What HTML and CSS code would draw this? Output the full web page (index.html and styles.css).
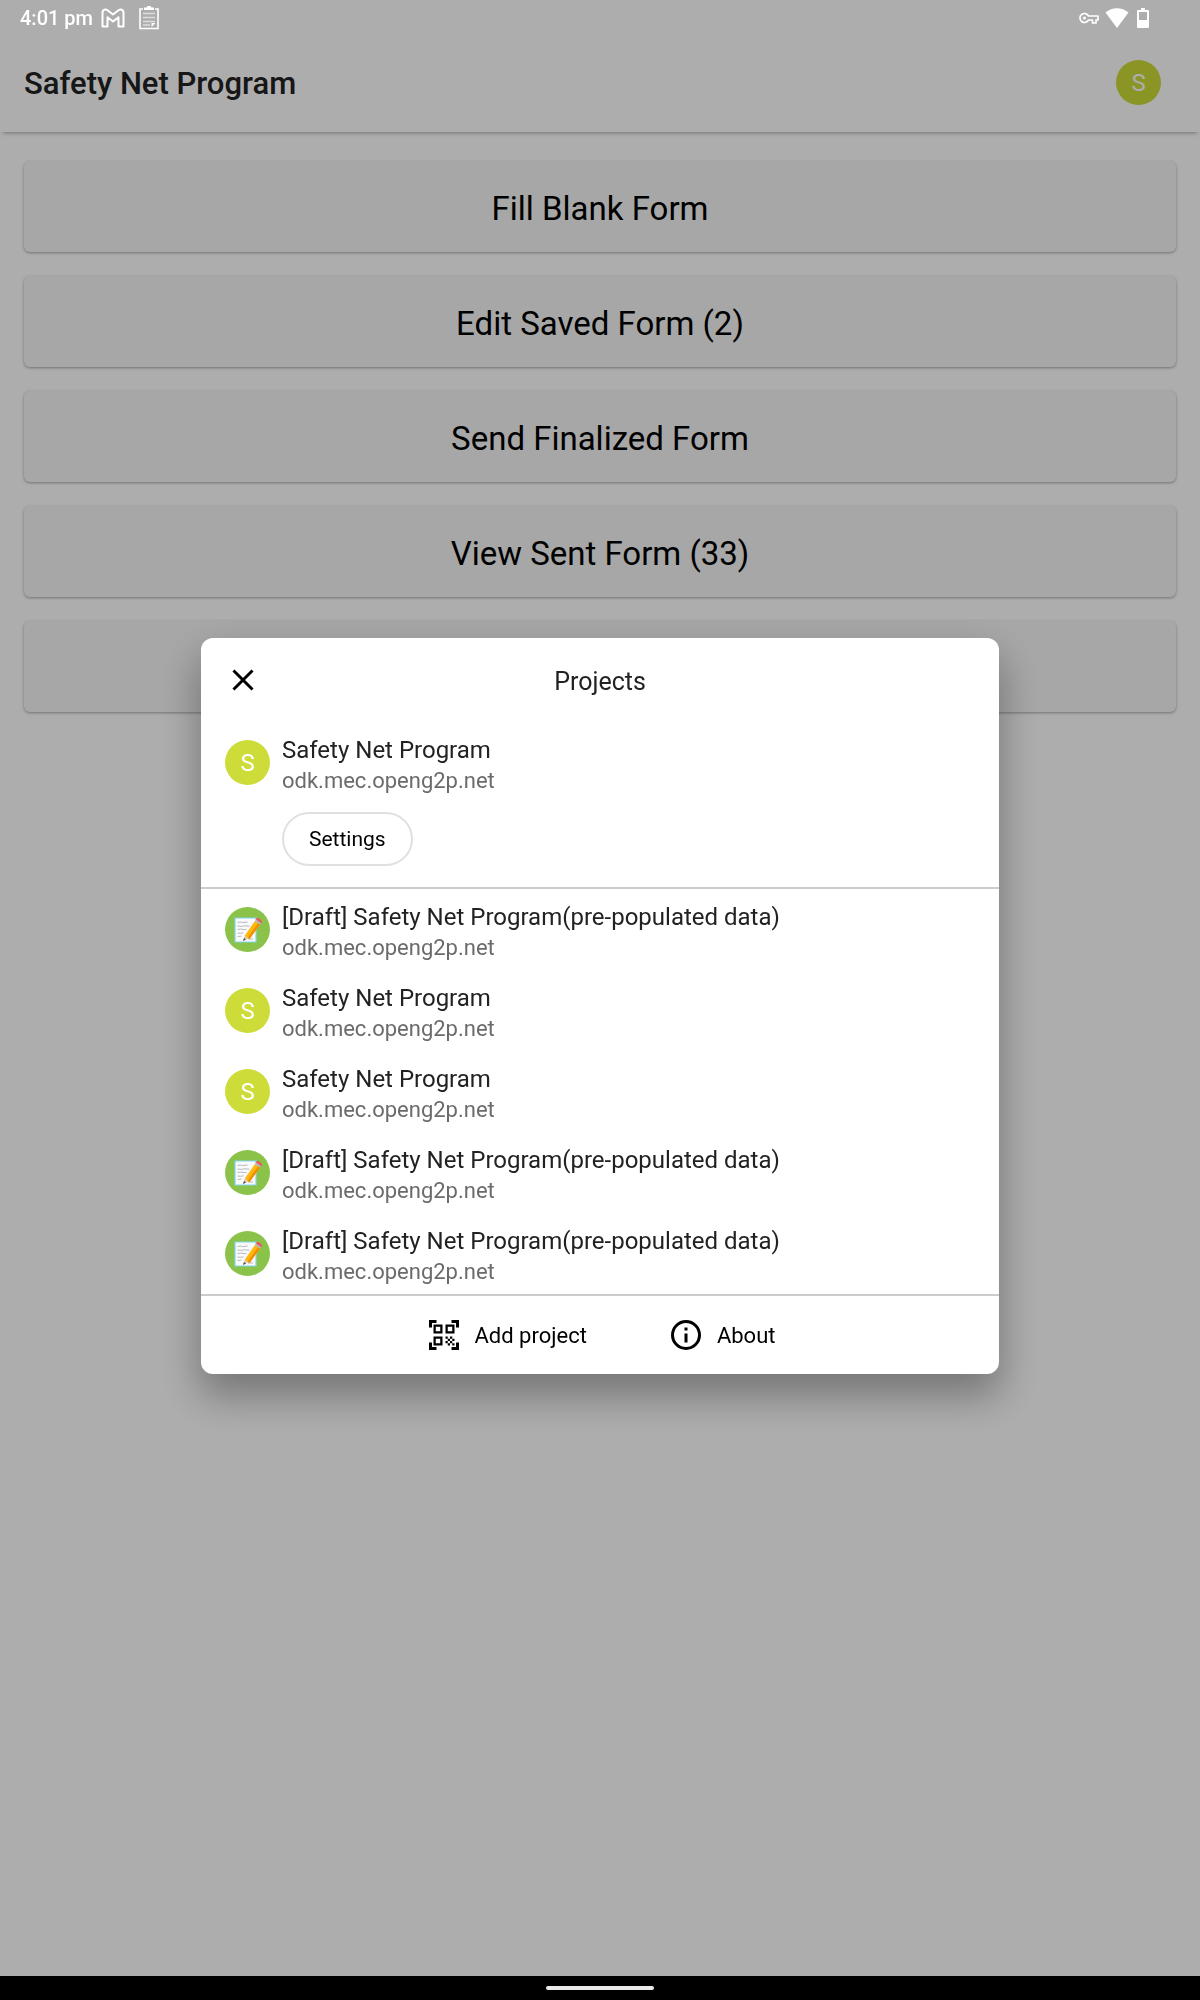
FILE: index.html
```html
<!DOCTYPE html>
<html lang="en">
<head>
<meta charset="utf-8">
<meta name="viewport" content="width=device-width, initial-scale=1">
<title>Safety Net Program</title>
<link rel="stylesheet" href="styles.css">
</head>
<body>
<svg class="sprite" aria-hidden="true">
  <symbol id="memo" viewBox="0 0 28 28">
    <path d="M1 2h21v24H1z" fill="#fafafa" stroke="#82d4f2" stroke-width="1.2"/>
    <path d="M3.500 6.500l3-.5 2 .6 5-.6M3.500 10l4 .4 3-.6 5 .4M3.500 13.500l3-.4 4 .5 2-.3M3.500 17l3 .3 3-.5M3.500 20.500l4-.4M14 23h5" fill="none" stroke="#b4b9bd" stroke-width="1"/>
    <path d="M9 25l2-6 4 3z" fill="#e8c9a0"/>
    <path d="M9 25l1-3 2 1.600z" fill="#454c50"/>
    <path d="M10.800 19.500L21 5l5 3.500L15.500 23z" fill="#ffb70d"/>
    <path d="M13.800 21.700L24 7.200l2 1.300L15.500 23z" fill="#f28c00"/>
    <path d="M21 5l1.300-1.800 5 3.500L26 8.500z" fill="#b0bec5"/>
    <path d="M22.300 3.200C23.500 1 28 3.800 27.300 6.700z" fill="#f2555a" stroke="#f2555a" stroke-width="1"/>
  </symbol>
</svg>

<div class="status">
  <span class="clock">4:01 pm</span>
  <svg class="gmail" viewBox="0 0 24 20" aria-hidden="true"><path d="M1.500 18.500v-14C1.500 1.500 4.500.8 6.500 2.300L12 6.500l5.500-4.200c2-1.500 5-.8 5 2.200v14h-5V9.300L12 13.500 6.500 9.300v9.200z" fill="none" stroke="#fff" stroke-width="2" stroke-linejoin="round"/></svg>
  <svg class="clip" viewBox="0 0 22 24" aria-hidden="true"><path d="M5 3H2v19.500h18V3h-3" fill="none" stroke="#fff" stroke-width="1.600"/><path d="M6 1.500h2.500L9.500 0h3l1 1.500H16V4H6z" fill="#fff"/><path d="M5 7.500h12M5 11.500h12M5 15.500h12M5 19h7" stroke="#ddd" stroke-width="1.400"/><path d="M13.500 17h4l-4 4z" fill="#fff"/></svg>
  <span class="spacer"></span>
  <svg class="key" viewBox="0 0 20 12" aria-hidden="true"><path d="M9.500 4H19v4h-2v3h-3.500V8h-4A4.500 4.500 0 1 1 9.500 4z" fill="none" stroke="#fff" stroke-width="1.700" stroke-linejoin="round"/><circle cx="5.500" cy="6" r="1.600" fill="#fff"/></svg>
  <svg class="wifi" viewBox="0 0 24 20" aria-hidden="true"><path d="M12 20L.5 4.500C7-1.200 17-1.200 23.500 4.500z" fill="#fff"/></svg>
  <svg class="battery" viewBox="0 0 12 20" aria-hidden="true"><path d="M4 0h4v2h3q1 0 1 1v16q0 1-1 1H1q-1 0-1-1V3q0-1 1-1h3zM2 4v8h8V4z" fill="#fff" fill-rule="evenodd"/></svg>
</div>

<header class="appbar">
  <h1 class="appbar-title">Safety Net Program</h1>
  <button class="avatar" aria-label="Projects">S</button>
</header>

<main class="menu">
  <button class="card">Fill Blank Form</button>
  <button class="card">Edit Saved Form (2)</button>
  <button class="card">Send Finalized Form</button>
  <button class="card">View Sent Form (33)</button>
  <button class="card" aria-label="Delete Saved Form"></button>
</main>

<div class="scrim">
  <section class="dialog" role="dialog" aria-modal="true" aria-labelledby="dialog-title">
    <header class="dialog-head">
      <button class="close" aria-label="Close"><svg viewBox="0 0 22 22" aria-hidden="true"><path d="M1.500 1.500l19 19M20.500 1.500l-19 19" stroke="#000" stroke-width="3"/></svg></button>
      <h2 class="dialog-title" id="dialog-title">Projects</h2>
    </header>
    <div class="current">
      <div class="project">
        <span class="avatar">S</span>
        <div class="project-text"><span class="name">Safety Net Program</span><span class="host">odk.mec.openg2p.net</span></div>
      </div>
      <button class="settings">Settings</button>
    </div>
    <ul class="projects">
      <li class="project">
        <span class="avatar draft"><svg class="memo"><use href="#memo"/></svg></span>
        <div class="project-text"><span class="name">[Draft] Safety Net Program(pre-populated data)</span><span class="host">odk.mec.openg2p.net</span></div>
      </li>
      <li class="project">
        <span class="avatar">S</span>
        <div class="project-text"><span class="name">Safety Net Program</span><span class="host">odk.mec.openg2p.net</span></div>
      </li>
      <li class="project">
        <span class="avatar">S</span>
        <div class="project-text"><span class="name">Safety Net Program</span><span class="host">odk.mec.openg2p.net</span></div>
      </li>
      <li class="project">
        <span class="avatar draft"><svg class="memo"><use href="#memo"/></svg></span>
        <div class="project-text"><span class="name">[Draft] Safety Net Program(pre-populated data)</span><span class="host">odk.mec.openg2p.net</span></div>
      </li>
      <li class="project">
        <span class="avatar draft"><svg class="memo"><use href="#memo"/></svg></span>
        <div class="project-text"><span class="name">[Draft] Safety Net Program(pre-populated data)</span><span class="host">odk.mec.openg2p.net</span></div>
      </li>
    </ul>
    <footer class="actions">
      <button class="action">
        <svg viewBox="2 2 20 20" aria-hidden="true"><path fill-rule="evenodd" d="M9.500 6.500v3h-3v-3zM11 5H5v6h6zM9.500 14.500v3h-3v-3zM11 13H5v6h6zM17.500 6.500v3h-3v-3zM19 5h-6v6h6zM13 13h1.500v1.500H13zM14.500 14.500H16V16h-1.500zM16 13h1.500v1.500H16zM13 16h1.500v1.500H13zM14.500 17.500H16V19h-1.500zM16 16h1.500v1.500H16zM17.500 14.500H19V16h-1.500zM17.500 17.500H19V19h-1.500zM22 7h-2V4h-3V2h5zM22 22v-5h-2v3h-3v2zM2 22h5v-2H4v-3H2zM2 2v5h2V4h3V2z"/></svg>
        Add project
      </button>
      <button class="action">
        <svg viewBox="0 0 30 30" aria-hidden="true"><circle cx="15" cy="15" r="13.500" fill="none" stroke="#000" stroke-width="3"/><path d="M13.500 7.500h3v3h-3zM13.500 13.500h3v9h-3z"/></svg>
        About
      </button>
    </footer>
  </section>
</div>

<div class="navbar"><span class="handle"></span></div>
</body>
</html>
```
FILE: styles.css
```css
* { box-sizing: border-box; }

body {
  margin: 0;
  min-height: 100vh;
  display: flex;
  flex-direction: column;
  background: #fff;
  color: #222;
  font-family: Roboto, sans-serif;
}

button {
  border: 0;
  padding: 0;
  background: none;
  color: #000;
  font: inherit;
  cursor: pointer;
}

h1, h2, ul { margin: 0; padding: 0; font-weight: 400; }
ul { list-style: none; }
svg { display: block; flex: none; }
.sprite { position: absolute; width: 0; height: 0; }

/* System status bar, above the scrim */
.status {
  position: relative;
  z-index: 2;
  height: 36px;
  padding: 0 51px 0 20px;
  display: flex;
  align-items: center;
  color: #fff;
}
.clock { font-size: 20px; font-weight: 500; line-height: 36px; }
.gmail { width: 24px; height: 20px; margin-left: 8px; }
.clip { width: 22px; height: 24px; margin-left: 13px; }
.spacer { flex: 1; }
.key { width: 20px; height: 12px; }
.wifi { width: 24px; height: 20px; margin: 0 8px 0 6px; }
.battery { width: 12px; height: 20px; }

.appbar {
  height: 96px;
  padding: 0 39px 0 24px;
  display: flex;
  align-items: center;
  justify-content: space-between;
  box-shadow: 0 4px 4px -3px rgba(0, 0, 0, .35);
}
.appbar-title { font-size: 31px; font-weight: 500; line-height: 40px; }
.appbar .avatar { margin-bottom: 3px; }

.avatar {
  flex: none;
  width: 45px;
  height: 45px;
  border-radius: 50%;
  display: flex;
  align-items: center;
  justify-content: center;
  background: #cddc39;
  color: #fff;
  font-size: 24px;
}
.draft { background: #8bc34a; }
.memo { width: 28px; height: 28px; }

.menu {
  padding: 29px 24px;
  display: grid;
  gap: 24px;
}
.card {
  height: 91px;
  padding-top: 3px;
  border-radius: 6px;
  background: #f6f6f6;
  box-shadow: 0 1px 3px rgba(0, 0, 0, .35);
  font-size: 33px;
}

.scrim {
  position: fixed;
  inset: 0;
  z-index: 1;
  padding: 36px 24px 24px;
  display: flex;
  align-items: center;
  justify-content: center;
  background: rgba(0, 0, 0, .32);
}
.dialog {
  width: 100%;
  max-width: 798px;
  border-radius: 12px;
  background: #fff;
  box-shadow: 0 20px 40px 2px rgba(0, 0, 0, .32);
}
.dialog-head {
  height: 84px;
  padding: 0 24px;
  display: grid;
  grid-template-columns: 36px 1fr 36px;
  align-items: center;
}
.close { width: 36px; height: 36px; display: grid; place-items: center; }
.close svg { width: 22px; height: 22px; }
.dialog-title { padding-top: 4px; font-size: 25px; line-height: 32px; text-align: center; }

.current { padding-bottom: 21px; }
.project {
  height: 81px;
  padding: 0 24px;
  display: flex;
  align-items: center;
  gap: 12px;
}
.project-text { padding-top: 4px; display: flex; flex-direction: column; }
.name { font-size: 24px; line-height: 32px; }
.host { font-size: 22px; line-height: 30px; color: #6b6b6b; }
.settings {
  height: 54px;
  margin: 9px 0 0 81px;
  padding: 0 25px;
  border: 2px solid #e0e0e0;
  border-radius: 27px;
  font-size: 21px;
}
.projects {
  border-top: 2px solid #ccc;
  border-bottom: 2px solid #ccc;
}
.actions {
  height: 78px;
  padding-left: 4px;
  display: flex;
  align-items: center;
  justify-content: center;
  gap: 84px;
}
.action {
  display: flex;
  align-items: center;
  gap: 16px;
  font-size: 22px;
}
.action svg { width: 30px; height: 30px; }

.navbar {
  position: relative;
  z-index: 2;
  height: 24px;
  margin-top: auto;
  display: flex;
  align-items: center;
  justify-content: center;
  background: #000;
}
.handle { width: 108px; height: 4px; border-radius: 2px; background: #ebebeb; }
```
